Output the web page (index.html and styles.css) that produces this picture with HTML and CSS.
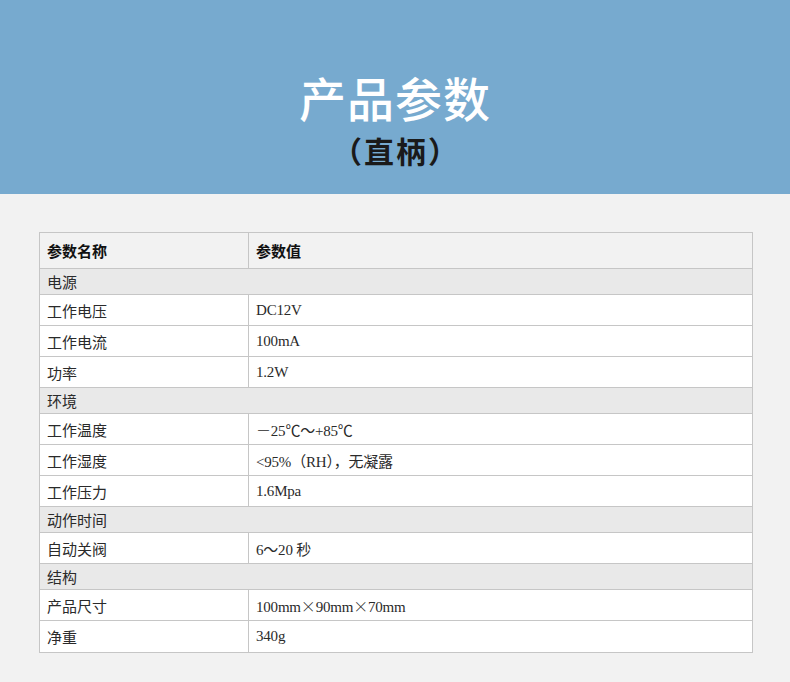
FILE: index.html
```html
<!DOCTYPE html>
<html lang="zh">
<head>
<meta charset="utf-8">
<link rel="stylesheet" href="styles.css">
</head>
<body>
<header class="banner">
  <h1 class="title">产品参数</h1>
  <div class="subtitle">（直柄）</div>
</header>
<main class="content">
  <table class="spec">
    <colgroup><col class="c1"><col class="c2"></colgroup>
    <tr class="head"><th>参数名称</th><th>参数值</th></tr>
    <tr class="group"><td colspan="2">电源</td></tr>
    <tr><td>工作电压</td><td class="val">DC12V</td></tr>
    <tr><td>工作电流</td><td class="val">100mA</td></tr>
    <tr><td>功率</td><td class="val">1.2W</td></tr>
    <tr class="group"><td colspan="2">环境</td></tr>
    <tr><td>工作温度</td><td class="val"><span class="cjk">－</span>25℃～+85℃</td></tr>
    <tr><td>工作湿度</td><td class="val">&lt;95%（RH），无凝露</td></tr>
    <tr><td>工作压力</td><td class="val">1.6Mpa</td></tr>
    <tr class="group"><td colspan="2">动作时间</td></tr>
    <tr><td>自动关阀</td><td class="val">6～20 秒</td></tr>
    <tr class="group"><td colspan="2">结构</td></tr>
    <tr><td>产品尺寸</td><td class="val">100mm<span class="cjk">×</span>90mm<span class="cjk">×</span>70mm</td></tr>
    <tr><td>净重</td><td class="val">340g</td></tr>
  </table>
</main>
</body>
</html>
```

FILE: styles.css
```css
html, body {
  margin: 0;
  padding: 0;
  background: #f2f2f2;
}
body {
  width: 790px;
  height: 682px;
  overflow: hidden;
  font-family: "Noto Sans CJK SC", "Noto Sans", sans-serif;
}
.banner {
  background: #77aacf;
  height: 194px;
  display: flex;
  flex-direction: column;
  align-items: center;
  box-sizing: border-box;
  padding-top: 67px;
}
.title {
  margin: 0;
  font-size: 47px;
  line-height: 60px;
  font-weight: 500;
  color: #ffffff;
  letter-spacing: 1px;
}
.subtitle {
  margin-top: 5px;
  font-size: 30px;
  line-height: 36px;
  font-weight: 700;
  color: #1a1a1a;
  letter-spacing: 2px;
  padding-left: 2px;
}
.content {
  padding: 38px 37px 0 39px;
}
.spec {
  width: 714px;
  border-collapse: collapse;
  font-size: 15px;
  color: #2a2a2a;
}
.c1 { width: 209px; }
.spec th, .spec td {
  border: 1px solid #c6c6c6;
  text-align: left;
  padding: 0 0 0 7px;
  height: 30px;
  font-weight: 400;
}
.spec .head th {
  height: 35px;
  background: #f2f2f2;
  font-weight: 700;
  color: #111;
}
.spec .group td {
  height: 25px;
  background: #e9e9e9;
}
.spec tr:not(.head):not(.group) td {
  background: #ffffff;
}
.spec tr:last-child td {
  height: 31px;
}
.spec .val {
  font-family: "Liberation Serif", "Noto Sans CJK SC", serif;
  font-size: 15px;
  letter-spacing: -0.2px;
}
.spec .cjk {
  font-family: "Noto Sans CJK SC", sans-serif;
  font-weight: 300;
}
```
